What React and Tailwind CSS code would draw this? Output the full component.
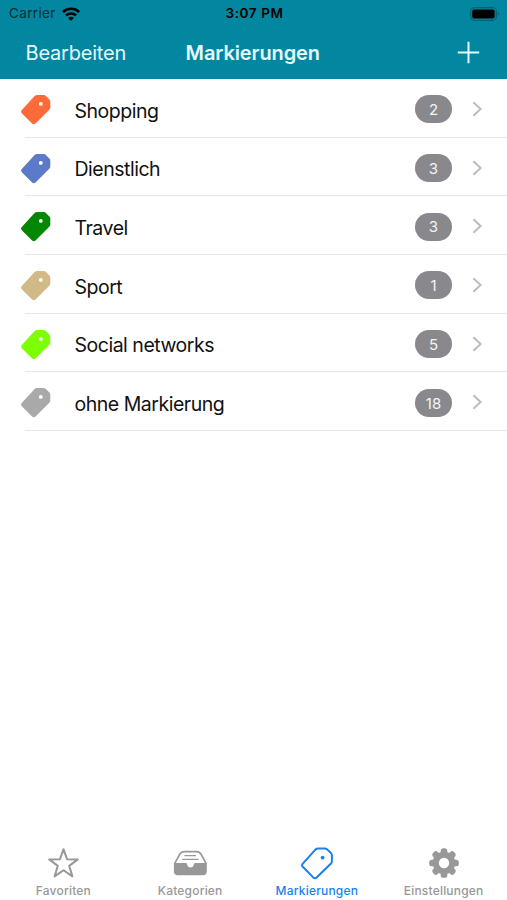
import React, { useState } from 'react';

const tags = [
  { id: 1, name: 'Shopping', count: 2, color: 'text-[#ff6a39]' },
  { id: 2, name: 'Dienstlich', count: 3, color: 'text-[#5b7bc8]' },
  { id: 3, name: 'Travel', count: 3, color: 'text-[#048804]' },
  { id: 4, name: 'Sport', count: 1, color: 'text-[#d2b988]' },
  { id: 5, name: 'Social networks', count: 5, color: 'text-[#7dff04]' },
  { id: 6, name: 'ohne Markierung', count: 18, color: 'text-[#a9a9a9]' },
];

function WifiIcon() {
  return (
    <svg viewBox="0 0 18 14" className="w-[18px] h-[14px]" fill="none" stroke="currentColor" strokeWidth="2.5">
      <path d="M0.9 5C5.4 0.8 12.6 0.8 17.1 5" />
      <path d="M3.9 8.4C6.7 5.7 11.3 5.7 14.1 8.4" />
      <path d="M9 13.8L6.1 10.9C7.8 9.3 10.2 9.3 11.9 10.9Z" fill="currentColor" stroke="none" />
    </svg>
  );
}

function BatteryIcon() {
  return (
    <svg viewBox="0 0 30 14" className="w-[30px] h-[14px]">
      <rect x="0.7" y="0.7" width="25.6" height="12.6" rx="3.8" fill="none" stroke="#036174" strokeWidth="1.2" />
      <rect x="2.2" y="2.5" width="22.4" height="9" rx="2" fill="#000" />
      <path d="M27.6 5.2C29.4 5.9 29.4 8.1 27.6 8.8Z" fill="#036174" />
    </svg>
  );
}

function TagIcon() {
  return (
    <svg viewBox="0 0 30 30" className="w-[30px] h-[30px]">
      <path
        d="M13.6 1Q14.8 0 16.2 0H22.8Q24 0 24.9 0.9L28.4 4.4Q29.3 5.3 29.3 6.5V12.6Q29.3 13.9 28.3 14.8L14.5 28.5Q12.8 30 11.1 28.5L0.8 18.2Q-0.7 16.5 0.8 14.9Z"
        fill="currentColor"
      />
      <circle cx="19.8" cy="8.9" r="1.9" fill="#fff" />
    </svg>
  );
}

function TagOutlineIcon() {
  return (
    <svg viewBox="0 0 34 34" className="w-[34px] h-[34px]" fill="none">
      <path
        d="M15.6 3.4Q16.9 2.4 18.2 2.4H24.8Q26.1 2.4 27 3.3L31 7.1Q31.9 8 31.9 9.2V15.2Q31.9 16.6 31 17.5L16.6 31.5Q14.9 33 13.2 31.4L2.8 20.8Q1.3 19.2 2.8 17.6Z"
        stroke="currentColor"
        strokeWidth="2"
        strokeLinejoin="round"
      />
      <circle cx="22.6" cy="11.6" r="1.9" fill="currentColor" />
    </svg>
  );
}

function StarIcon() {
  return (
    <svg viewBox="0 0 34 34" className="w-[34px] h-[34px]" fill="none">
      <path
        d="M17.5 3.2L21 13.2L31.8 13.4L23.2 19.9L26.4 30.4L17.5 24.2L8.6 30.4L11.8 19.9L3.2 13.4L14 13.2Z"
        stroke="currentColor"
        strokeWidth="2"
        strokeLinejoin="round"
      />
    </svg>
  );
}

function TrayIcon() {
  return (
    <svg viewBox="0 0 34 34" className="w-[34px] h-[34px]" fill="none">
      <path
        d="M1.6 17.6L6.8 8.2Q8.3 5.7 11.3 5.7H23.5Q26.5 5.7 28 8.2L33.2 17.6"
        stroke="currentColor"
        strokeWidth="1.7"
      />
      <path d="M12 9.7H22.5M9.8 13.4H25" stroke="currentColor" strokeWidth="1.3" strokeLinecap="round" />
      <path
        d="M0.9 17H12.6Q13.8 17 14 18Q14.6 21.6 17.5 21.6Q20.3 21.6 20.9 18Q21.1 17 22.3 17H33.8V25.2Q33.8 29.2 29.8 29.2H4.9Q0.9 29.2 0.9 25.2Z"
        fill="currentColor"
      />
    </svg>
  );
}

function GearIcon() {
  return (
    <svg viewBox="0 0 34 34" className="w-[34px] h-[34px]">
      <g fill="currentColor">
        {[0, 45, 90, 135].map((angle) => (
          <rect key={angle} x="13.7" y="2.2" width="6.6" height="29.6" rx="2.6" transform={`rotate(${angle} 17 17)`} />
        ))}
        <circle cx="17" cy="17" r="11.3" />
      </g>
      <circle cx="17" cy="17" r="5.2" fill="#fff" />
    </svg>
  );
}

const tabs = [
  { id: 'favoriten', label: 'Favoriten', icon: StarIcon },
  { id: 'kategorien', label: 'Kategorien', icon: TrayIcon },
  { id: 'markierungen', label: 'Markierungen', icon: TagOutlineIcon },
  { id: 'einstellungen', label: 'Einstellungen', icon: GearIcon },
];

function App() {
  const [active, setActive] = useState('markierungen');

  return (
    <div className="w-full h-screen flex flex-col overflow-hidden bg-white font-['Inter',sans-serif]">
      {/* Header */}
      <header className="h-[79px] shrink-0 bg-[#03869f]">
        <div className="h-[27px] grid grid-cols-3 items-center pl-[9px] pr-[7px] text-black">
          <div className="flex items-center gap-1.5 text-[13.5px] tracking-[0.35px] text-[#022f38]">
            <span>Carrier</span>
            <span className="text-black"><WifiIcon /></span>
          </div>
          <div className="text-center text-[13.5px] font-semibold tracking-[0.6px]">3:07 PM</div>
          <div className="flex justify-end"><BatteryIcon /></div>
        </div>
        <div className="h-[51px] grid grid-cols-3 items-center pl-[25.5px] pr-[27px] text-[20px] text-[#e4fbff]">
          <button className="text-left tracking-[-0.2px]">Bearbeiten</button>
          <h1 className="text-center font-semibold tracking-[-0.1px]">Markierungen</h1>
          <button className="flex justify-end" aria-label="Hinzufügen">
            <svg viewBox="0 0 23 23" className="w-[23px] h-[23px]" stroke="currentColor" strokeWidth="2">
              <path d="M11.5 0.8V22.2M0.8 11.5H22.2" />
            </svg>
          </button>
        </div>
      </header>

      {/* Tag list */}
      <ul className="flex-1">
        {tags.map((tag) => (
          <li key={tag.id} className="h-[58.7px] flex items-stretch pl-[21px]">
            <div className={`w-1 flex items-center overflow-visible ${tag.color}`}>
              <span className="shrink-0 pt-[3px]"><TagIcon /></span>
            </div>
            <div className="flex-1 flex items-center border-b border-[#e6e6e8] pl-[49.5px] pr-[25px]">
              <span className="flex-1 pt-[7px] text-[19.5px] tracking-[-0.48px] text-[#111]">{tag.name}</span>
              <span className="w-[37px] h-[28px] mt-[3px] rounded-[14px] bg-[#89898d] flex items-center justify-center pt-[2px] text-[15px] text-[#f4f4f6]">
                {tag.count}
              </span>
              <svg viewBox="0 0 10 16" className="ml-[20px] mt-[2px] w-[10px] h-[16px]" fill="none" stroke="#bcbcc0" strokeWidth="2">
                <path d="M1.4 1.2L8.6 8L1.4 14.8" />
              </svg>
            </div>
          </li>
        ))}
      </ul>

      {/* Tab bar */}
      <nav className="h-[56px] shrink-0 grid grid-cols-4">
        {tabs.map(({ id, label, icon: Icon }) => (
          <button
            key={id}
            onClick={() => setActive(id)}
            className={`flex flex-col items-center pt-[2px] ${active === id ? 'text-[#1a7ff2]' : 'text-[#989898]'}`}
          >
            <Icon />
            <span className="mt-[3px] text-[12px] leading-[16px] font-medium tracking-[0.2px]">{label}</span>
          </button>
        ))}
      </nav>
    </div>
  );
}

export default App;
